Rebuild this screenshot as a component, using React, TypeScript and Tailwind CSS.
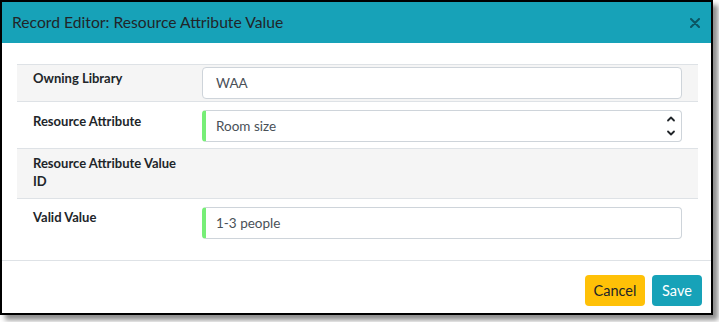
import React from 'react';

function Chevrons() {
  return (
    <svg width="10" height="22" viewBox="0 0 10 22" className="text-[#212529]">
      <path d="M2 5.5 L5 2.5 L8 5.5" fill="none" stroke="currentColor" strokeWidth="1.8" strokeLinecap="round" strokeLinejoin="round" />
      <path d="M2 16.5 L5 19.5 L8 16.5" fill="none" stroke="currentColor" strokeWidth="1.8" strokeLinecap="round" strokeLinejoin="round" />
    </svg>
  );
}

export default function App() {
  return (
    <div className="w-[719px] h-[322px] bg-white font-['Lato',Arial,sans-serif]">
      <div className="w-[713px] h-[315px] border-2 border-black bg-white flex flex-col shadow-[5px_5px_5px_rgba(0,0,0,0.45)]">
        {/* Header */}
        <div className="h-[41px] bg-[#17a2b8] flex items-center justify-between pl-[10px] pr-[11px]">
          <h5 className="text-[15.7px] text-[#212529] leading-none">Record Editor: Resource Attribute Value</h5>
          <svg width="10" height="10" viewBox="0 0 10 10" className="text-[#0b5562]">
            <path d="M1 1 L9 9 M9 1 L1 9" stroke="currentColor" strokeWidth="2" strokeLinecap="round" />
          </svg>
        </div>

        {/* Body */}
        <div className="flex-1 pt-[21px] pl-[15px] pr-[13px]">
          <div className="border-t border-[#dee2e6] text-[13px] text-[#212529]">
            <div className="flex h-[37px] bg-[#f5f5f5] border-b border-[#dee2e6]">
              <div className="w-[173px] pl-[16px] pt-[4px] font-bold leading-[18px]">Owning Library</div>
              <div className="flex-1 pl-[12px] pr-[16px] pt-[2px]">
                <div className="h-[32px] bg-white border border-[#ced4da] rounded-[4px] flex items-center pl-[13px] text-[13.5px] text-[#495057]">WAA</div>
              </div>
            </div>
            <div className="flex h-[47px] border-b border-[#dee2e6]">
              <div className="w-[173px] pl-[16px] pt-[10px] font-bold leading-[18px]">Resource Attribute</div>
              <div className="flex-1 pl-[12px] pr-[16px] pt-[8px]">
                <div className="h-[32px] bg-white border border-[#ced4da] border-l-[4px] border-l-[#77ee77] rounded-[4px] flex items-center justify-between pl-[10px] pr-[5px] text-[13.5px] text-[#495057]">
                  <span>Room size</span>
                  <Chevrons />
                </div>
              </div>
            </div>
            <div className="flex h-[50px] bg-[#f5f5f5] border-b border-[#dee2e6]">
              <div className="w-[173px] pl-[16px] pt-[5px] font-bold leading-[18px]">Resource Attribute Value ID</div>
              <div className="flex-1" />
            </div>
            <div className="flex h-[46px]">
              <div className="w-[173px] pl-[16px] pt-[9px] font-bold leading-[18px]">Valid Value</div>
              <div className="flex-1 pl-[12px] pr-[16px] pt-[8px]">
                <div className="h-[32px] bg-white border border-[#ced4da] border-l-[4px] border-l-[#77ee77] rounded-[4px] flex items-center pl-[10px] text-[13.5px] text-[#495057]">1-3 people</div>
              </div>
            </div>
          </div>
        </div>

        {/* Footer */}
        <div className="h-[53px] border-t border-[#dee2e6] flex items-start justify-end gap-[7px] pt-[14px] pr-[9px] text-[14.5px]">
          <button className="h-[31px] w-[60px] bg-[#ffc107] text-[#212529] rounded-[4px]">Cancel</button>
          <button className="h-[31px] w-[50px] bg-[#17a2b8] text-white rounded-[4px]">Save</button>
        </div>
      </div>
    </div>
  );
}
